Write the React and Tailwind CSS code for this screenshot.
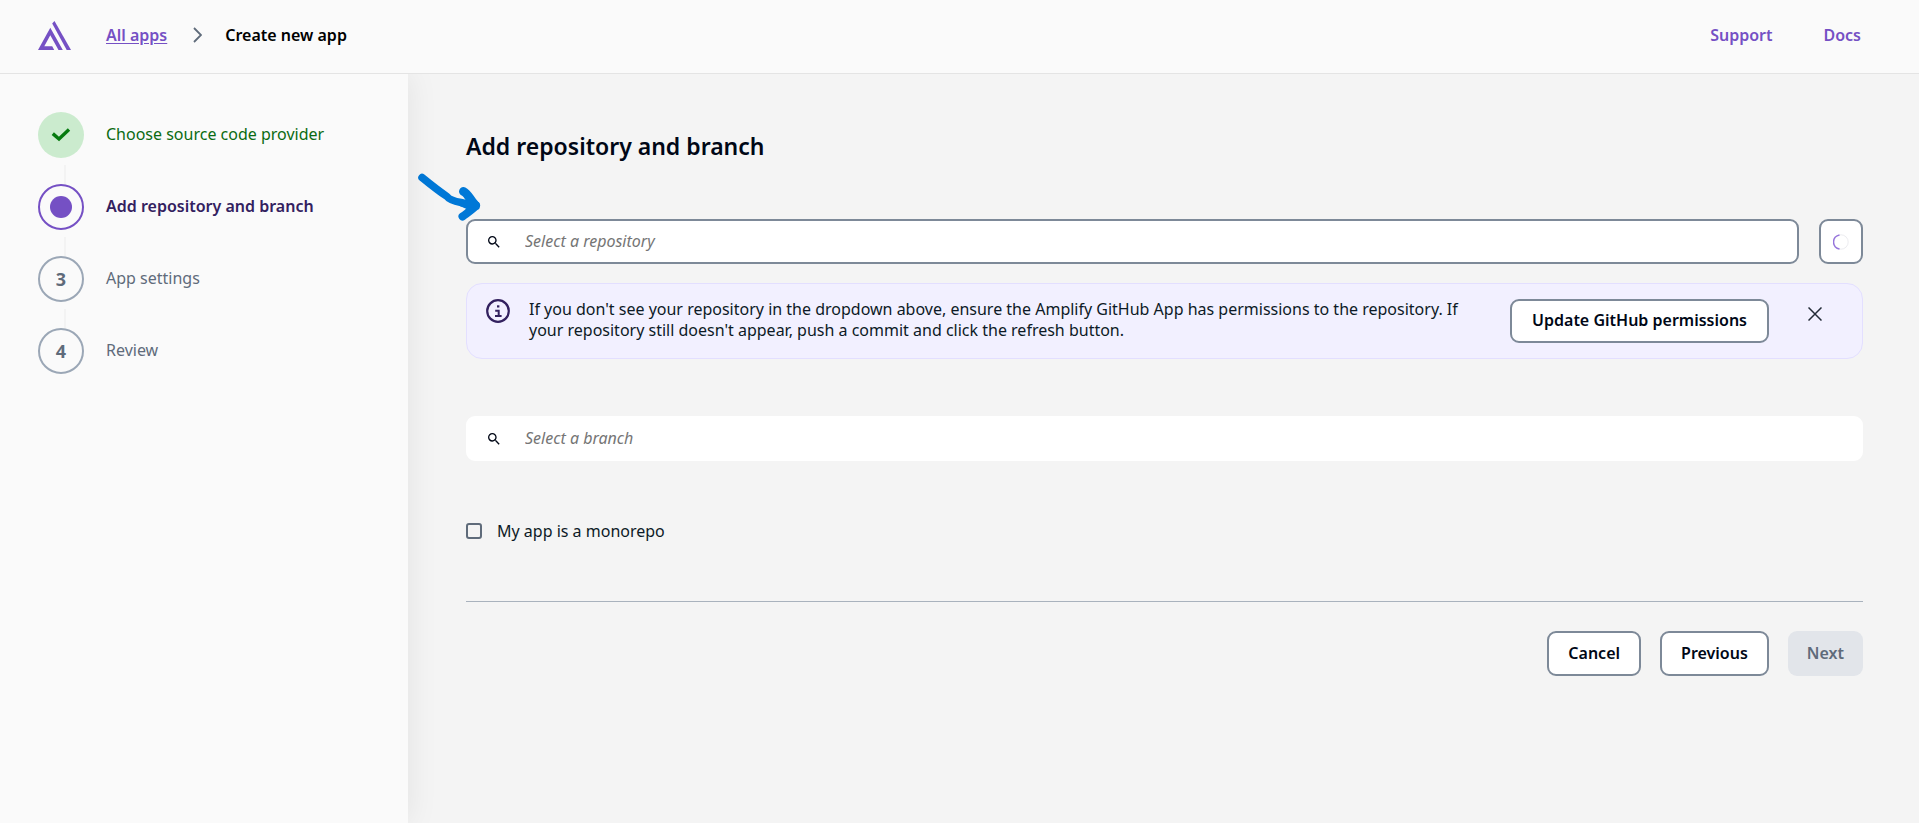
import { MdSearch } from "react-icons/md";

const outlined =
  "flex items-center justify-center rounded-[9px] border-2 border-[#7d8998] bg-white pb-[2px] text-[16px] font-semibold text-[#000716]";

function Logo() {
  return (
    <svg width="33" height="29" viewBox="0 0 33 29" fill="#7550c4" aria-hidden="true">
      <path d="M14.2 2.600L16.500 0L33 29H28.700Z" />
      <path
        fillRule="evenodd"
        d="M12.3 6.800L24.800 29H20.500L12.3 14.200L6.300 25.200H14.200L16.200 29H0Z"
      />
    </svg>
  );
}

function Header() {
  return (
    <header className="flex h-[74px] items-center justify-between border-b border-[#e4e4e4] bg-[#fafafa] pb-[3px] pl-[38px] pr-[58px]">
      <nav aria-label="Breadcrumb" className="flex items-center text-[16px] font-semibold">
        <a href="#home" aria-label="Amplify home" className="mr-[35px]">
          <Logo />
        </a>
        <a href="#apps" className="text-[#7550c4] underline underline-offset-2">
          All apps
        </a>
        <svg className="ml-[26px] mr-[23px] text-[#5f6b7a]" width="9" height="16" viewBox="0 0 9 16" fill="none" stroke="currentColor" strokeWidth="1.8" aria-hidden="true">
          <path d="M1 1L8 8L1 15" />
        </svg>
        <span className="text-black">Create new app</span>
      </nav>
      <nav aria-label="Help" className="flex gap-[51px] text-[16px] font-semibold text-[#7550c4]">
        <a href="#support">Support</a>
        <a href="#docs">Docs</a>
      </nav>
    </header>
  );
}

const steps = [
  { label: "Choose source code provider", state: "done" },
  { label: "Add repository and branch", state: "current" },
  { label: "App settings", state: "todo" },
  { label: "Review", state: "todo" },
];

const circleStyles = {
  done: "bg-[#cbebce] text-[#067a0f]",
  current: "border-2 border-[#7550c4]",
  todo: "border-2 border-[#9ba7b6] text-[#5f6b7a]",
};

const labelStyles = {
  done: "text-[#0b6b12]",
  current: "font-semibold text-[#33215f]",
  todo: "text-[#5f6b7a]",
};

function Sidebar() {
  return (
    <aside className="z-10 w-[408px] shrink-0 bg-[#fafafa] px-[38px] pt-[38px] shadow-[0_0_30px_rgba(0,0,0,0.08)]">
      <ol>
        {steps.map((step, i) => (
          <li key={step.label}>
            <div className="flex items-center gap-[22px]">
              <span className={`flex size-[46px] items-center justify-center rounded-full text-[18px] font-bold ${circleStyles[step.state]}`}>
                {step.state === "done" && (
                  <svg width="20" height="14" viewBox="0 0 20 14" fill="none" stroke="currentColor" strokeWidth="3.4" aria-hidden="true">
                    <path d="M1.8 5.6L8 11L18 1.6" />
                  </svg>
                )}
                {step.state === "current" && <span className="size-[22px] rounded-full bg-[#7550c4]" />}
                {step.state === "todo" && i + 1}
              </span>
              <span className={`pb-[2px] text-[16px] leading-[24px] ${labelStyles[step.state]}`}>{step.label}</span>
            </div>
            {i < steps.length - 1 && (
              <div className="flex h-[26px] items-end pl-[26px]">
                <span className="h-[19px] w-[2px] bg-[#f3f3f3]" />
              </div>
            )}
          </li>
        ))}
      </ol>
    </aside>
  );
}

function SearchField({ label, className }) {
  return (
    <label className={`flex h-[45px] items-center rounded-[9px] border-2 bg-white pl-[18px] ${className}`}>
      <MdSearch size={16} className="shrink-0 text-[#000716]" aria-hidden="true" />
      <input
        type="text"
        aria-label={label}
        placeholder={label}
        className="ml-[23px] min-w-0 flex-1 bg-transparent pb-[2px] text-[16px] outline-none placeholder:italic placeholder:text-[#757575]"
      />
    </label>
  );
}

function Arrow() {
  return (
    <svg className="absolute -left-[48px] -top-[46px]" width="64" height="50" viewBox="0 0 64 50" fill="none" stroke="#0078d7" strokeLinecap="round" strokeLinejoin="round" aria-hidden="true">
      <path strokeWidth="7.500" d="M4 4.500C12 11 20 17.500 29 23.500C31 26.500 35 28 43 29.500L55 32.500" />
      <path strokeWidth="9" d="M45.500 18.500C50 20.500 52 27 57 32" />
      <path strokeWidth="8" d="M58 32.500C54 37 49 40 44.500 43.500" />
      <path fill="#0078d7" strokeWidth="3" d="M48 29L60 30.500L60 35L52 36L43 32Z" />
    </svg>
  );
}

function Notice() {
  return (
    <section className="mt-[19px] flex min-h-[76px] items-center rounded-[16px] border border-[#e3dfff] bg-[#f2f0ff] py-[15px] pl-[19px] pr-[40px]">
      <svg className="shrink-0 self-start" width="24" height="24" viewBox="0 0 24 24" fill="none" stroke="#33215f" aria-hidden="true">
        <circle cx="12" cy="12" r="10.800" strokeWidth="2.200" />
        <path strokeWidth="2" d="M9.200 11.700H12.700V16.500M9 17H15.600" />
        <path strokeWidth="2.200" d="M11 7.400H13.400" />
      </svg>
      <p className="ml-[19px] flex-1 self-start text-[16px] leading-[21px] text-[#0d1a26]">
        If you don't see your repository in the dropdown above, ensure the Amplify GitHub App has permissions to the repository. If your repository still doesn't appear, push a commit and click the refresh button.
      </p>
      <button type="button" className={`${outlined} ml-[38px] h-[44px] shrink-0 px-5`}>
        Update GitHub permissions
      </button>
      <button type="button" aria-label="Dismiss" className="ml-[39px] mt-[8px] self-start">
        <svg width="14" height="14" viewBox="0 0 14 14" fill="none" stroke="#232b37" strokeWidth="1.500" aria-hidden="true">
          <path d="M0.500 0.500L13.500 13.500M13.500 0.500L0.500 13.500" />
        </svg>
      </button>
    </section>
  );
}

export default function App() {
  return (
    <div className="flex min-h-screen flex-col bg-[#f4f4f4] font-['Noto_Sans',sans-serif]">
      <Header />
      <div className="flex flex-1 overflow-hidden">
        <Sidebar />
        <main className="min-w-0 flex-1 pb-10 pl-[58px] pr-[56px] pt-[56px]">
          <h1 className="text-[23px] font-semibold leading-[32px] text-[#000716]">Add repository and branch</h1>
          <div className="relative mt-[57px] flex gap-5">
            <Arrow />
            <SearchField label="Select a repository" className="flex-1 border-[#7d8998]" />
            <button type="button" aria-label="Refresh repositories" className="flex h-[45px] w-[44px] items-center justify-center rounded-[9px] border-2 border-[#7d8998] bg-white">
              <svg width="16" height="16" viewBox="0 0 16 16" fill="none" aria-hidden="true">
                <circle cx="8" cy="8" r="7.200" stroke="#ececf0" strokeWidth="1" />
                <path d="M6.500 0.900A7.200 7.200 0 0 0 6.500 15.100" stroke="#9674dc" strokeWidth="1.500" />
              </svg>
            </button>
          </div>
          <Notice />
          <SearchField label="Select a branch" className="mt-[57px] border-white" />
          <label className="mt-[58px] flex h-[24px] items-center gap-[15px] text-[16px] text-[#0d1a26]">
            <input type="checkbox" className="size-4 appearance-none rounded-[3px] border-2 border-[#5f6b7a] checked:bg-[#7550c4]" />
            My app is a monorepo
          </label>
          <hr className="mt-[58px] border-[#a9b2bd]" />
          <div className="mt-[29px] flex justify-end gap-[19px]">
            <button type="button" className={`${outlined} h-[45px] px-[19px]`}>Cancel</button>
            <button type="button" className={`${outlined} h-[45px] px-[19px]`}>Previous</button>
            <button type="button" disabled className="h-[45px] rounded-[9px] bg-[#e2e5ea] px-[19px] pb-[2px] text-[16px] font-semibold text-[#5f6b7a]">
              Next
            </button>
          </div>
        </main>
      </div>
    </div>
  );
}
